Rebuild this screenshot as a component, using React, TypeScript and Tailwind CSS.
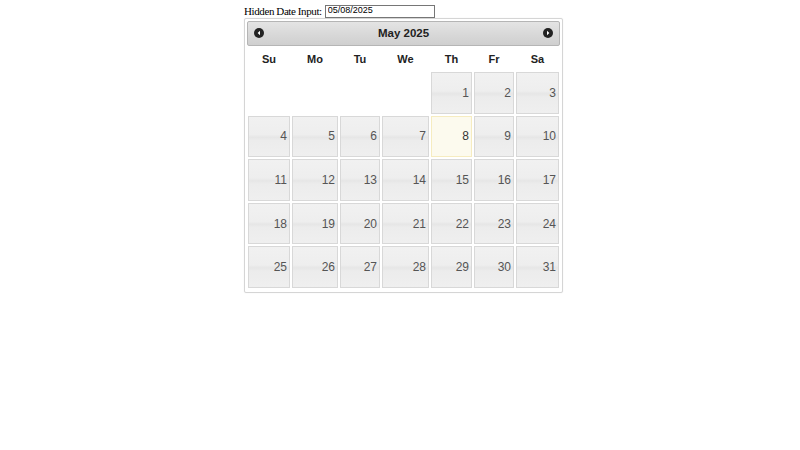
const WEEKDAYS = ['Su', 'Mo', 'Tu', 'We', 'Th', 'Fr', 'Sa'];

// May 2025 starts on a Thursday
const FIRST_WEEKDAY = 4;
const DAYS_IN_MONTH = 31;
const SELECTED = 8;

function ArrowIcon({ dir }: { dir: 'prev' | 'next' }) {
    return (
        <svg width="10" height="10" viewBox="0 0 10 10">
            <circle cx="5" cy="5" r="5" fill="#222" />
            {dir === 'prev'
                ? <path d="M6 2.8 L3.6 5 L6 7.2 Z" fill="#fff" />
                : <path d="M4 2.8 L6.4 5 L4 7.2 Z" fill="#fff" />}
        </svg>
    );
}

export default function App() {
    const cells: (number | null)[] = [];
    for (let i = 0; i < FIRST_WEEKDAY; i++) cells.push(null);
    for (let d = 1; d <= DAYS_IN_MONTH; d++) cells.push(d);

    return (
        <div className="min-h-[450px] bg-white px-[244px] pt-[4px]">
            <div className="flex items-center h-[14px] font-['Liberation_Serif',serif] text-[11px] tracking-[-0.4px] text-black">
                <span>Hidden Date Input:</span>
                <input
                    readOnly
                    value="05/08/2025"
                    className="ml-[3px] w-[110px] h-[13px] border border-[#767676] px-[2px] font-['Liberation_Sans',sans-serif] text-[9px] tracking-normal text-black outline-none"
                />
            </div>
            <div className="w-[319px] border border-[#d5d5d5] rounded-[2px] p-[2px] pb-[4px] shadow-[0_0_1px_rgba(0,0,0,0.15)] font-['Liberation_Sans',sans-serif]">
                <div className="relative flex items-center justify-center h-[25px] border border-[#b5b5b5] rounded-[2px] bg-[linear-gradient(#e4e4e4,#d9d9d9_50%,#cfcfcf)]">
                    <span className="absolute left-[6px] top-[6px] cursor-pointer"><ArrowIcon dir="prev" /></span>
                    <span className="text-[11.5px] font-bold text-[#222]">May 2025</span>
                    <span className="absolute right-[6px] top-[6px] cursor-pointer"><ArrowIcon dir="next" /></span>
                </div>
                <div className="grid grid-cols-[42px_46px_40px_47px_41px_40px_43px] gap-x-[2px] ml-[1px]">
                    {WEEKDAYS.map((w) => (
                        <div key={w} className="flex items-center justify-center h-[26px] text-[11px] font-bold text-[#222]">{w}</div>
                    ))}
                </div>
                <div className="grid grid-cols-[42px_46px_40px_47px_41px_40px_43px] auto-rows-[41.6px] gap-[2px] ml-[1px]">
                    {cells.map((d, i) =>
                        d === null ? (
                            <div key={i} />
                        ) : (
                            <div
                                key={i}
                                className={
                                    d === SELECTED
                                        ? 'flex items-center justify-end pr-[2px] border border-[#f6ecc0] bg-[#fcfaee] text-[12px] text-[#363636] cursor-pointer'
                                        : 'flex items-center justify-end pr-[2px] border border-[#d8d8d8] bg-[linear-gradient(#f1f1f1,#eeeeee_45%,#e6e6e6_52%,#ececec_60%,#efefef)] text-[12px] text-[#555] cursor-pointer'
                                }
                            >
                                {d}
                            </div>
                        )
                    )}
                </div>
            </div>
        </div>
    );
}
